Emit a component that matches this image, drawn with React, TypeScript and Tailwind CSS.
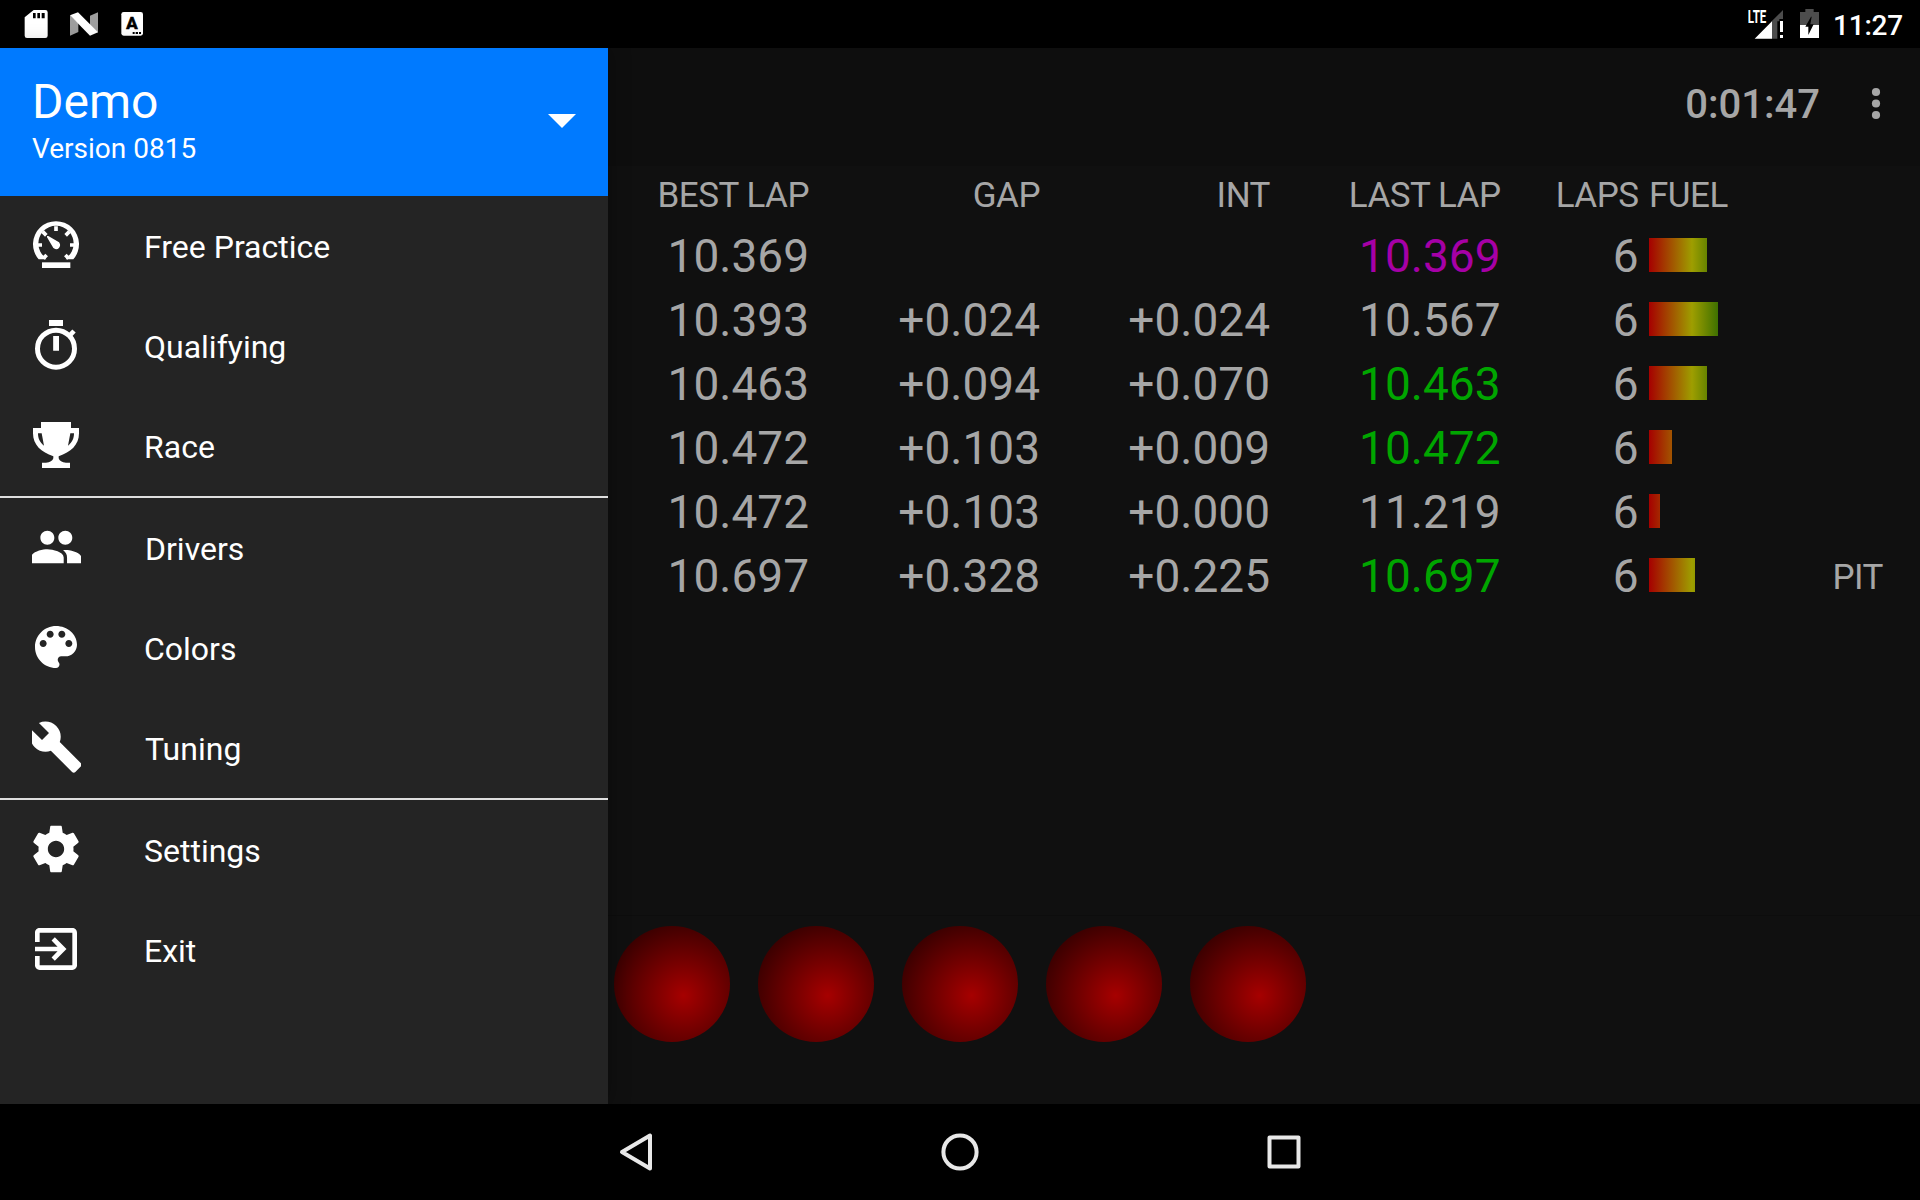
import React from "react";

type IconProps = { children: React.ReactNode; viewBox?: string };

function MenuIcon({ children, viewBox = "0 0 24 24" }: IconProps) {
  return (
    <svg viewBox={viewBox} className="-mt-0.5 h-14 w-14 shrink-0 fill-white [clip-path:inset(0_3px_0_4px)]">
      {children}
    </svg>
  );
}

const GaugeIcon = () => (
  <MenuIcon viewBox="0 0 168 168">
    <path d="M32 127A69 69 0 1 1 136 127H113L118 120A53 53 0 1 0 50 120L55 127Z" />
    <g className="stroke-white" strokeWidth="11">
      <path d="M84 28V42M28 84H42M140 84H126M44 44L55 55M124 44L113 55M46 124L56 114M122 124L112 114" />
    </g>
    <path d="M57 57L61 57L88 73A12 12 0 1 1 73 88L57 61Z" />
    <path d="M42 136H127V153H42Z" />
  </MenuIcon>
);

const TimerIcon = () => (
  <MenuIcon viewBox="0 0 168 168">
    <path d="M63 9H105V27H63ZM75.500 57H93V101H75.500Z" />
    <circle cx="84" cy="95" r="55.500" className="fill-none stroke-white" strokeWidth="15" />
    <path d="M122 59L138 42" className="stroke-white" strokeWidth="14" />
  </MenuIcon>
);

const TrophyIcon = () => (
  <MenuIcon viewBox="0 0 168 168">
    <path
      fillRule="evenodd"
      d="M39 15H129V33H153V49C153 84 128 106 92 118V124C94 132 102 136 114 137H126V153H42V137H54C66 136 74 132 76 124V118C40 106 15 84 15 49V33H39ZM30 49C30 62 34 76 48 86L41 49ZM138 49H127L120 86C134 76 138 62 138 49Z"
    />
  </MenuIcon>
);

const PeopleIcon = () => (
  <MenuIcon>
    <path d="M16 11c1.660 0 2.990-1.340 2.990-3S17.660 5 16 5s-3 1.340-3 3 1.340 3 3 3zm-7.700 0c1.660 0 2.990-1.340 2.990-3S9.960 5 8.300 5 5.300 6.340 5.300 8s1.340 3 3 3zm0 2c-2.330 0-7 1.170-7 3.500V19h14v-2.500c0-2.330-4.670-3.500-7-3.500zm7.700 0.300c-.29 0-.62.02-.97.05 1.160.84 1.700 1.700 1.700 3.150V19h6.270v-2.200c0-2.330-4.670-3.500-7-3.500z" />
  </MenuIcon>
);

const PaletteIcon = () => (
  <MenuIcon>
    <path d="M12 3c-4.970 0-9 4.030-9 9s4.030 9 9 9c.83 0 1.500-.67 1.500-1.500 0-.39-.15-.74-.39-1.010-.23-.26-.38-.61-.38-.99 0-.83.67-1.500 1.500-1.500H16c2.760 0 5-2.240 5-5 0-4.420-4.030-8-9-8zm-5.500 9c-.83 0-1.500-.67-1.500-1.500S5.670 9 6.500 9 8 9.670 8 10.500 7.330 12 6.500 12zm3-4C8.670 8 8 7.330 8 6.500S8.670 5 9.500 5s1.500.67 1.500 1.500S10.330 8 9.500 8zm5 0c-.83 0-1.500-.67-1.500-1.500S13.670 5 14.500 5s1.500.67 1.500 1.500S15.330 8 14.500 8zm3 4c-.83 0-1.500-.67-1.500-1.500S16.670 9 17.500 9s1.500.67 1.500 1.500-.67 1.500-1.500 1.500z" />
  </MenuIcon>
);

const WrenchIcon = () => (
  <MenuIcon>
    <path d="M22.700 19l-9.100-9.100c.9-2.300.4-5-1.500-6.900-2-2-5-2.400-7.400-1.300L9 6 6 9 1.600 4.700C.4 7.100.9 10.100 2.900 12.100c1.900 1.900 4.600 2.400 6.900 1.500l9.100 9.100c.4.4 1 .4 1.400 0l2.300-2.300c.5-.4.5-1.100.1-1.400z" />
  </MenuIcon>
);

const GearIcon = () => (
  <MenuIcon>
    <path d="M19.430 12.980c.04-.32.07-.64.07-.98s-.03-.66-.07-.98l2.110-1.650c.19-.15.24-.42.12-.64l-2-3.460c-.12-.22-.39-.3-.61-.22l-2.490 1c-.52-.4-1.080-.73-1.690-.98l-.38-2.650C14.460 2.180 14.250 2 14 2h-4c-.25 0-.46.18-.49.42l-.38 2.650c-.61.25-1.170.59-1.690.98l-2.490-1c-.23-.09-.49 0-.61.22l-2 3.460c-.13.22-.07.49.12.64l2.110 1.650c-.04.32-.07.65-.07.98s.03.66.07.98l-2.110 1.650c-.19.15-.24.42-.12.64l2 3.460c.12.22.39.3.61.22l2.490-1c.52.4 1.080.73 1.690.98l.38 2.650c.03.24.24.42.49.42h4c.25 0 .46-.18.49-.42l.38-2.650c.61-.25 1.170-.59 1.690-.98l2.490 1c.23.09.49 0 .61-.22l2-3.460c.12-.22.07-.49-.12-.64l-2.110-1.650zM12 15.500c-1.930 0-3.500-1.570-3.500-3.500s1.570-3.500 3.500-3.500 3.500 1.570 3.500 3.500-1.570 3.500-3.500 3.500z" />
  </MenuIcon>
);

const ExitIcon = () => (
  <MenuIcon>
    <path d="M10.090 15.590L11.500 17l5-5-5-5-1.410 1.410L12.670 11H3v2h9.670l-2.580 2.590zM19 3H5c-1.110 0-2 .9-2 2v4h2V5h14v14H5v-4H3v4c0 1.100.89 2 2 2h14c1.100 0 2-.9 2-2V5c0-1.100-.9-2-2-2z" />
  </MenuIcon>
);

const menu = [
  [
    { label: "Free Practice", Icon: GaugeIcon, wide: false },
    { label: "Qualifying", Icon: TimerIcon, wide: false },
    { label: "Race", Icon: TrophyIcon, wide: false },
  ],
  [
    { label: "Drivers", Icon: PeopleIcon, wide: true },
    { label: "Colors", Icon: PaletteIcon, wide: false },
    { label: "Tuning", Icon: WrenchIcon, wide: true },
  ],
  [
    { label: "Settings", Icon: GearIcon, wide: false },
    { label: "Exit", Icon: ExitIcon, wide: false },
  ],
];

const PLAIN = "";
const BEST = "text-[#a600a6]";
const PERSONAL = "text-[#00a600]";

const rows = [
  { best: "10.369", gap: "", int: "", last: "10.369", tone: BEST, laps: 6, fuel: 58, pit: false },
  { best: "10.393", gap: "+0.024", int: "+0.024", last: "10.567", tone: PLAIN, laps: 6, fuel: 69, pit: false },
  { best: "10.463", gap: "+0.094", int: "+0.070", last: "10.463", tone: PERSONAL, laps: 6, fuel: 58, pit: false },
  { best: "10.472", gap: "+0.103", int: "+0.009", last: "10.472", tone: PERSONAL, laps: 6, fuel: 23, pit: false },
  { best: "10.472", gap: "+0.103", int: "+0.000", last: "11.219", tone: PLAIN, laps: 6, fuel: 11, pit: false },
  { best: "10.697", gap: "+0.328", int: "+0.225", last: "10.697", tone: PERSONAL, laps: 6, fuel: 46, pit: true },
];

function StatusBar() {
  return (
    <header className="flex h-12 shrink-0 items-center justify-between bg-black pr-4 pl-6 text-white">
      <div className="flex h-full items-center">
        <svg viewBox="0 0 384 144" className="h-12 w-32">
          <path
            fill="#fff"
            fillRule="evenodd"
            d="M29 30H64Q71 30 71 37V107Q71 114 64 114H9Q2 114 2 107V52ZM27 39V55H35V39ZM40 39V55H48V39ZM53 39V55H62V39Z"
          />
          <path fill="#9e9e9e" d="M138 46L163 70V96L138 107ZM222 37V98L198 76V47Z" />
          <path fill="#fff" d="M138 46L162 37L222 97L198 107Z" />
          <rect x="292" y="36" width="65" height="71" rx="7" fill="#fff" />
          <text x="307" y="87" textLength="34" lengthAdjust="spacingAndGlyphs" stroke="#000" strokeWidth="2" className="text-[48px] font-bold">
            A
          </text>
          <path d="M326 96H332V102H326ZM335 96H342V102H335ZM345 96H351V102H345Z" />
        </svg>
      </div>
      <div className="flex h-full items-center">
        <svg viewBox="204 0 222 144" className="mr-[11px] h-12 w-[74px]">
          <path fill="#4d4d4d" d="M309 30V57H298V64H292V116H275V64Z" />
          <path fill="#fff" d="M276 64V116H224ZM300 63H309V96H300ZM300 105H309V114H300Z" />
          <text
            x="203"
            y="69"
            textLength="56"
            lengthAdjust="spacingAndGlyphs"
            className="fill-white text-[53px] font-bold"
          >
            LTE
          </text>
          <path fill="#4d4d4d" d="M376 27H401V36H417V75H360V36H376Z" />
          <path fill="#fff" d="M360 75H417V114H360Z" />
          <path fill="#000" d="M393 50L376 80H385V105L401 73H391L395 50Z" />
        </svg>
        <span className="pt-[3px] pr-px text-[28px] leading-none font-medium tracking-[-0.2px]">11:27</span>
      </div>
    </header>
  );
}

function Drawer() {
  return (
    <aside className="relative z-10 flex w-[608px] shrink-0 flex-col bg-[#242424] text-white shadow-[0_0_20px_rgba(0,0,0,0.35)]">
      <div className="flex h-37 items-center justify-between bg-[#007aff] pr-8 pl-8">
        <div className="flex flex-col">
          <span className="text-5xl leading-[54px]">Demo</span>
          <span className="text-[28px] leading-10">Version 0815</span>
        </div>
        <svg viewBox="0 0 28 14" className="mb-0.5 h-3.5 w-7 fill-white">
          <path d="M0 0H28L14 14Z" />
        </svg>
      </div>
      <nav>
        {menu.map((group, i) => (
          <ul key={i} className={i > 0 ? "border-t-2 border-[#dedede]" : ""}>
            {group.map(({ label, Icon, wide }) => (
              <li key={label} className="flex h-25 items-center pl-7">
                <Icon />
                <span className={`pt-0.5 text-[32px] leading-10 ${wide ? "pl-[61px]" : "pl-15"}`}>{label}</span>
              </li>
            ))}
          </ul>
        ))}
      </nav>
    </aside>
  );
}

const GRID = "grid grid-cols-[201px_231px_230px_230.5px_138px_10.5px_100px_1fr] items-center text-right";

function Board() {
  return (
    <main className="flex flex-1 flex-col bg-[#101010] text-[#a6a6a6]">
      <div className="flex h-[118px] items-center justify-end bg-[#0e0e0e] pr-5 pb-1.5">
        <span className="pt-0.5 pr-8 text-[40px] leading-none font-medium">0:01:47</span>
        <svg viewBox="0 0 48 48" className="h-12 w-12 fill-[#a6a6a6]">
          <circle cx="24" cy="12" r="4.100" />
          <circle cx="24" cy="23.500" r="4.100" />
          <circle cx="24" cy="35" r="4.100" />
        </svg>
      </div>
      <div className={`${GRID} h-[58px] pt-0.5 text-[35px] leading-10 tracking-[-0.5px]`}>
        <span>BEST LAP</span>
        <span>GAP</span>
        <span>INT</span>
        <span>LAST LAP</span>
        <span>LAPS</span>
        <span />
        <span className="text-left">FUEL</span>
      </div>
      {rows.map((r, i) => (
        <div key={i} className={`${GRID} h-16 text-[46px] leading-16`}>
          <span>{r.best}</span>
          <span>{r.gap}</span>
          <span>{r.int}</span>
          <span className={r.tone}>{r.last}</span>
          <span>{r.laps}</span>
          <span />
          <span
            className="mb-0.5 h-[34px] bg-[linear-gradient(to_right,#a60000_0,#9e9e00_43px,#005300_86px)]"
            style={{ width: r.fuel }}
          />
          <span className="pt-1 pr-[37px] text-[35px] leading-10 tracking-[-0.5px]">{r.pit ? "PIT" : ""}</span>
        </div>
      ))}
      <div className="mt-auto flex h-[189px] gap-7 border-t border-[#0d0d0d] pt-2.5 pl-1.5">
        {[0, 1, 2, 3, 4].map((n) => (
          <span
            key={n}
            className="h-[116px] w-[116px] rounded-full bg-[radial-gradient(circle_116px_at_60%_60%,#a60000,#000)]"
          />
        ))}
      </div>
    </main>
  );
}

function NavBar() {
  return (
    <footer className="flex h-24 shrink-0 items-center justify-center gap-[284px] bg-black">
      <svg viewBox="0 0 40 40" className="h-10 w-10 fill-none stroke-[#e8e8e8]" strokeWidth="4" strokeLinejoin="round">
        <path d="M34 3.500V36.500L6 20Z" />
      </svg>
      <svg viewBox="0 0 40 40" className="h-10 w-10 fill-none stroke-[#e8e8e8]" strokeWidth="4">
        <circle cx="20" cy="20" r="16.600" />
      </svg>
      <svg viewBox="0 0 40 40" className="h-10 w-10 fill-none stroke-[#e8e8e8]" strokeWidth="4" strokeLinejoin="round">
        <rect x="5.500" y="5.500" width="29" height="29" />
      </svg>
    </footer>
  );
}

export default function App() {
  return (
    <div className="flex h-[1200px] w-[1920px] flex-col overflow-hidden bg-black font-['Roboto',sans-serif]">
      <StatusBar />
      <div className="flex min-h-0 flex-1">
        <Drawer />
        <Board />
      </div>
      <NavBar />
    </div>
  );
}
